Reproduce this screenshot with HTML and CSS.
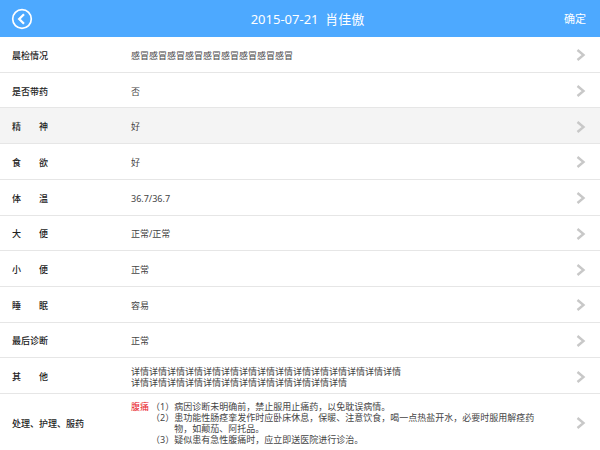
FILE: index.html
```html
<!DOCTYPE html>
<html lang="zh-CN">
<head>
    <meta charset="UTF-8">
    <meta name="viewport" content="width=device-width, initial-scale=1.0">
    <title>2015-07-21 肖佳傲</title>
    <link rel="stylesheet" href="styles.css">
</head>
<body>
    <header class="header">
        <button type="button" class="back-btn" aria-label="返回">
            <svg viewBox="0 0 22 22" width="22" height="22" fill="none" stroke="currentColor">
                <circle cx="11" cy="11" r="9.3" stroke-width="1.7"/>
                <path d="M13 6.3 L8.2 11 L13 15.7" stroke-width="2.3"/>
            </svg>
        </button>
        <h1 class="title">2015-07-21&nbsp; 肖佳傲</h1>
        <button type="button" class="confirm-btn">确定</button>
    </header>

    <main class="list">
        <a class="row" href="#">
            <span class="label">晨检情况</span>
            <span class="value">感冒感冒感冒感冒感冒感冒感冒感冒感冒</span>
            <svg class="arrow" viewBox="0 0 10 12"><path d="M1.5 1 L7.5 6 L1.5 11"/></svg>
        </a>
        <a class="row" href="#">
            <span class="label">是否带药</span>
            <span class="value">否</span>
            <svg class="arrow" viewBox="0 0 10 12"><path d="M1.5 1 L7.5 6 L1.5 11"/></svg>
        </a>
        <a class="row active" href="#">
            <span class="label spread">精 神</span>
            <span class="value">好</span>
            <svg class="arrow" viewBox="0 0 10 12"><path d="M1.5 1 L7.5 6 L1.5 11"/></svg>
        </a>
        <a class="row" href="#">
            <span class="label spread">食 欲</span>
            <span class="value">好</span>
            <svg class="arrow" viewBox="0 0 10 12"><path d="M1.5 1 L7.5 6 L1.5 11"/></svg>
        </a>
        <a class="row" href="#">
            <span class="label spread">体 温</span>
            <span class="value">36.7/36.7</span>
            <svg class="arrow" viewBox="0 0 10 12"><path d="M1.5 1 L7.5 6 L1.5 11"/></svg>
        </a>
        <a class="row" href="#">
            <span class="label spread">大 便</span>
            <span class="value">正常/正常</span>
            <svg class="arrow" viewBox="0 0 10 12"><path d="M1.5 1 L7.5 6 L1.5 11"/></svg>
        </a>
        <a class="row" href="#">
            <span class="label spread">小 便</span>
            <span class="value">正常</span>
            <svg class="arrow" viewBox="0 0 10 12"><path d="M1.5 1 L7.5 6 L1.5 11"/></svg>
        </a>
        <a class="row" href="#">
            <span class="label spread">睡 眠</span>
            <span class="value">容易</span>
            <svg class="arrow" viewBox="0 0 10 12"><path d="M1.5 1 L7.5 6 L1.5 11"/></svg>
        </a>
        <a class="row" href="#">
            <span class="label">最后诊断</span>
            <span class="value">正常</span>
            <svg class="arrow" viewBox="0 0 10 12"><path d="M1.5 1 L7.5 6 L1.5 11"/></svg>
        </a>
        <a class="row" href="#">
            <span class="label spread">其 他</span>
            <span class="value">详情详情详情详情详情详情详情详情详情详情详情详情详情详情详情<br>详情详情详情详情详情详情详情详情详情详情详情详情</span>
            <svg class="arrow" viewBox="0 0 10 12"><path d="M1.5 1 L7.5 6 L1.5 11"/></svg>
        </a>
        <a class="row last" href="#">
            <span class="label">处理、护理、服药</span>
            <span class="value advice">
                <span class="symptom">腹痛</span>
                <span class="steps">
                    <span class="step"><span>（1）</span><span>病因诊断未明确前，禁止服用止痛药，以免耽误病情。</span></span>
                    <span class="step"><span>（2）</span><span>患功能性肠痉挛发作时应卧床休息，保暖、注意饮食，喝一点热盐开水，必要时服用解痉药<br>物，如颠茄、阿托品。</span></span>
                    <span class="step"><span>（3）</span><span>疑似患有急性腹痛时，应立即送医院进行诊治。</span></span>
                </span>
            </span>
            <svg class="arrow" viewBox="0 0 10 12"><path d="M1.5 1 L7.5 6 L1.5 11"/></svg>
        </a>
    </main>
</body>
</html>
```
FILE: styles.css
```css
* {
    box-sizing: border-box;
}
body {
    margin: 0;
    min-height: 100vh;
    display: flex;
    flex-direction: column;
    background: #fff;
    color: #444;
    font-family: "Noto Sans", "Noto Sans CJK SC", sans-serif;
    font-size: 9px;
    line-height: 11px;
}
.header {
    display: grid;
    grid-template-columns: 1fr auto 1fr;
    align-items: center;
    height: 37px;
    padding: 0 14px 0 11px;
    background: #4da9ff;
    color: #fff;
}
.back-btn,
.confirm-btn {
    padding: 0;
    border: none;
    background: none;
    color: inherit;
    font-family: inherit;
    cursor: pointer;
}
.back-btn {
    justify-self: start;
}
.back-btn svg {
    display: block;
}
.confirm-btn {
    justify-self: end;
    font-size: 11px;
    line-height: 16px;
}
.title {
    margin: 0;
    padding-left: 18px;
    font-size: 13px;
    font-weight: normal;
    line-height: 20px;
}
.list {
    flex: 1;
    display: grid;
    grid-template-rows: repeat(10, minmax(30px, 1fr)) auto;
}
.row {
    display: grid;
    grid-template-columns: 119px 1fr 10px;
    align-items: center;
    padding: 2px 14px 0 12px;
    border-bottom: 1px solid #e6e6e6;
    color: inherit;
    text-decoration: none;
}
.row.active {
    background: #f4f4f4;
}
.row.last {
    min-height: 56px;
    border-bottom: none;
}
.label {
    color: #222;
    font-weight: 500;
}
.label.spread {
    width: 36px;
    text-align-last: justify;
}
.arrow {
    width: 10px;
    height: 12px;
    fill: none;
    stroke: #c8c8c8;
    stroke-width: 2.4;
}
.advice {
    display: flex;
    gap: 2px;
}
.symptom {
    flex: none;
    color: #e8232b;
}
.step {
    display: flex;
}
.step span:first-child {
    flex: none;
}
```
